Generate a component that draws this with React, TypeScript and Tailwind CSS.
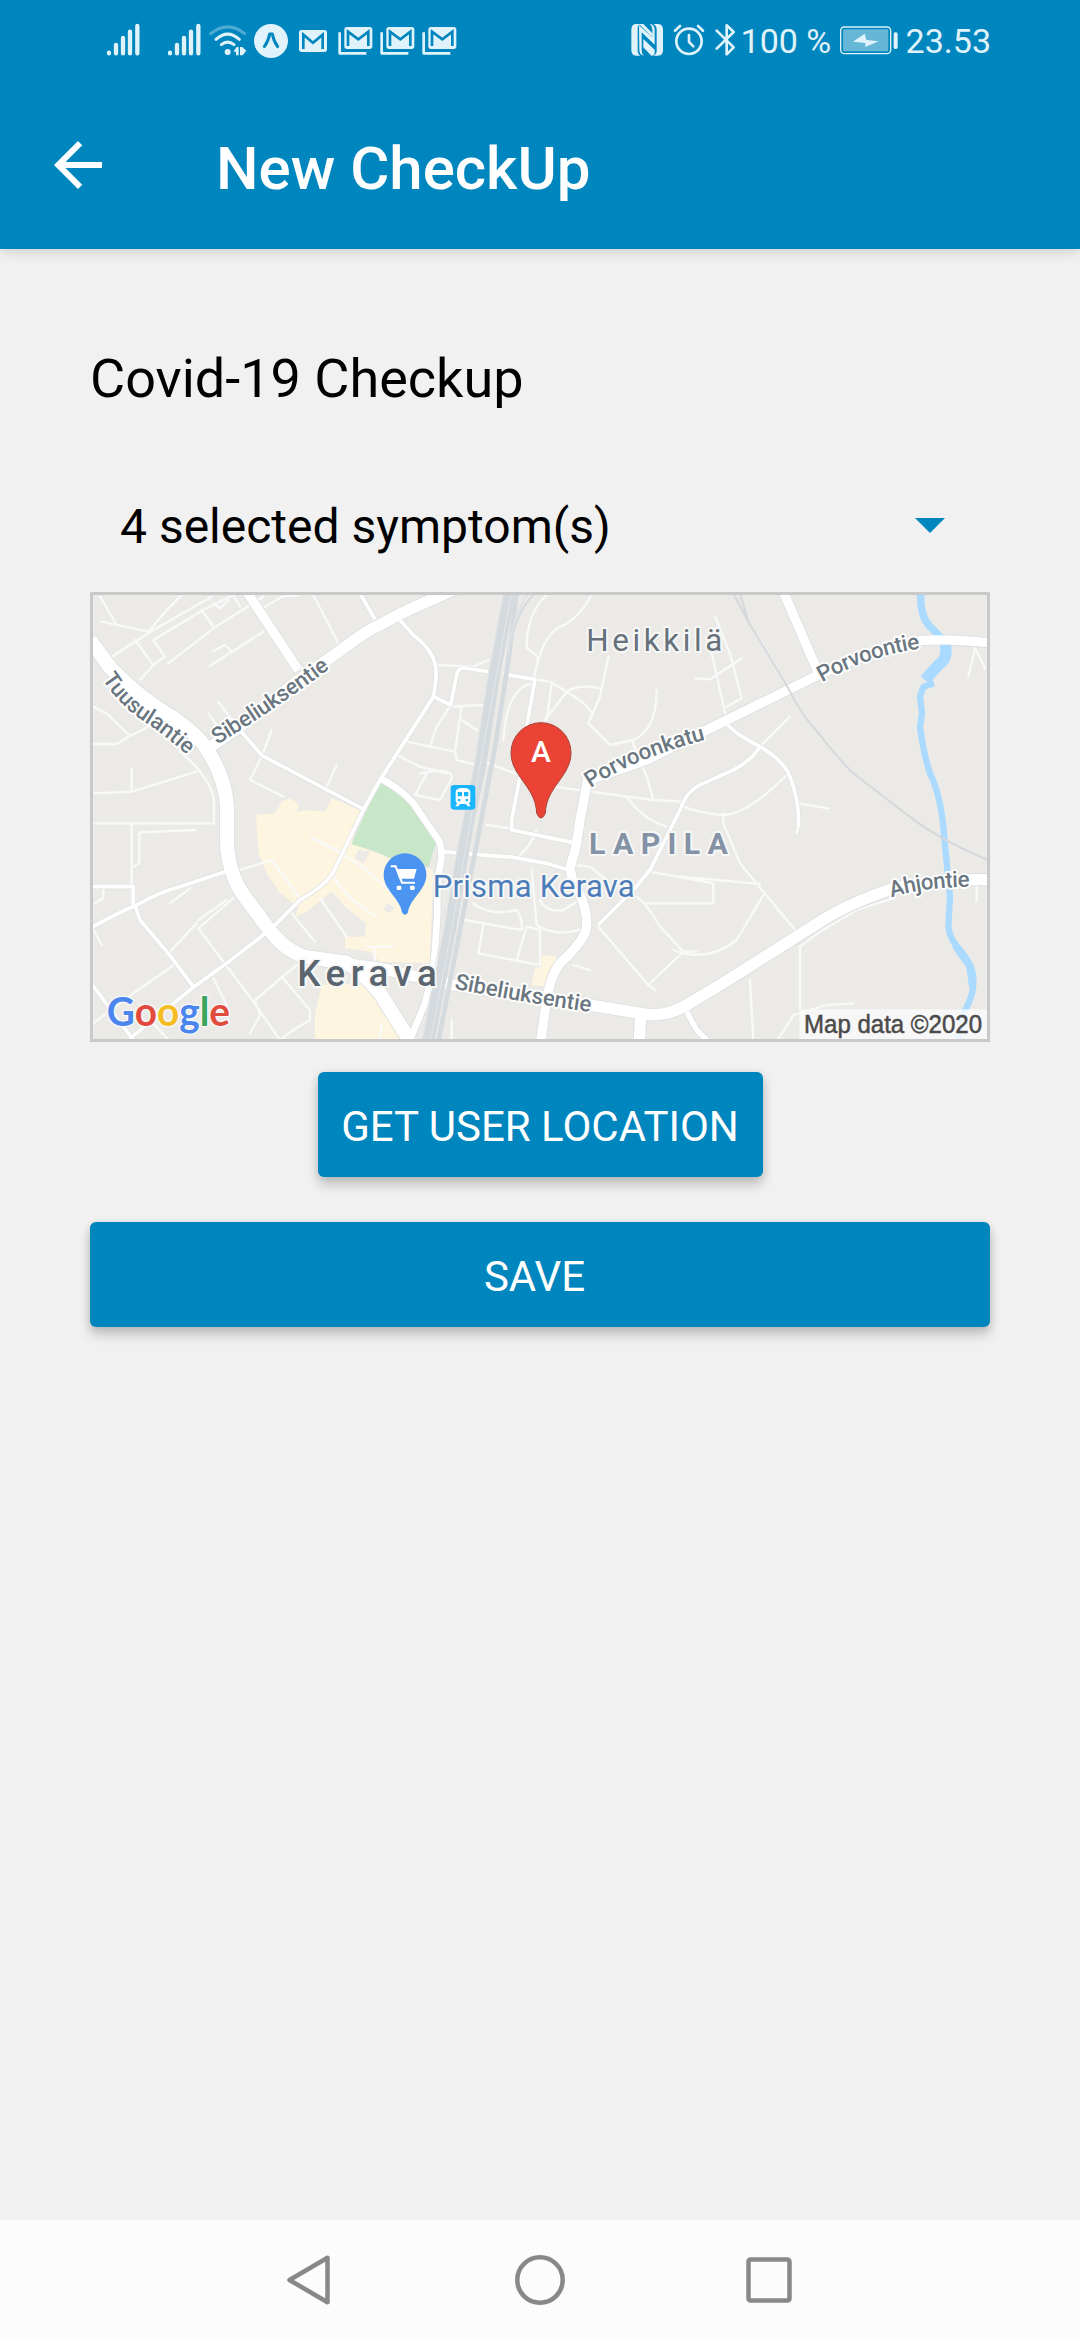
import type { ReactNode } from "react";

const TINT = "#e0f2fa";

function StatusGlyph({ box, className, children }: { box: string; className: string; children: ReactNode }) {
  return (
    <svg viewBox={box} className={`h-10 shrink-0 ${className}`} fill="none">
      {children}
    </svg>
  );
}

function Signal({ className, box }: { className: string; box: string }) {
  return (
    <StatusGlyph box={box} className={className}>
      <g stroke={TINT} strokeWidth="13" strokeLinecap="round">
        <path d="M57 99V101M78 76V101M99 55V101M120 36V101M142 19V101" transform="translate(0 59)" />
      </g>
    </StatusGlyph>
  );
}

function MailStack({ className }: { className: string }) {
  return (
    <StatusGlyph box="740 60 126 120" className={className}>
      <path d="M748 97V160H828" stroke={TINT} strokeWidth="8" strokeLinejoin="round" />
      <rect x="762" y="81" width="84" height="66" rx="8" fill={TINT} />
      <path d="M773 138V95L804 118L834 95V138" stroke="#0086be" strokeWidth="8" />
    </StatusGlyph>
  );
}

function StatusBar() {
  return (
    <div className="flex h-20 items-center pl-[105px] pr-[89px]">
      <Signal box="45 60 183 120" className="w-[61px]" />
      <Signal box="45 60 123 120" className="w-[41px]" />
      <StatusGlyph box="351 60 132 120" className="w-[44px]">
        <g stroke={TINT} strokeWidth="9" strokeLinecap="round">
          <path d="M362 101Q413 60 464 101" opacity=".35" />
          <path d="M378 118Q413 87 448 118" />
          <path d="M394 134Q413 119 432 134" />
        </g>
        <circle cx="413" cy="156" r="9" fill={TINT} />
        <path d="M430 155L440 141H446V166H438V155ZM450 141H457L469 152L458 166H450Z" fill={TINT} />
      </StatusGlyph>
      <StatusGlyph box="483 60 126 120" className="w-[42px]">
        <circle cx="543" cy="123" r="51" fill={TINT} />
        <path d="M523 140Q535 124 539 102H547Q551 124 563 140" stroke="#0086be" strokeWidth="9" strokeLinejoin="round" strokeLinecap="round" />
      </StatusGlyph>
      <StatusGlyph box="609 60 131 120" className="w-[43.67px]">
        <rect x="627" y="90" width="84" height="66" rx="8" fill={TINT} />
        <path d="M640 147V104L669 128L698 104V147" stroke="#0086be" strokeWidth="8" />
      </StatusGlyph>
      <MailStack className="w-[42px]" />
      <MailStack className="w-[42px]" />
      <MailStack className="w-[42px]" />

      <div className="ml-auto flex items-center">
        <StatusGlyph box="54 60 126 120" className="w-[42px]">
          <path d="M90 72H76Q61 72 61 89V150Q61 167 76 167H88Q80 162 80 150V83Q80 76 90 72Z" fill={TINT} />
          <path d="M127 72H140Q156 72 156 89V150Q156 167 141 167H127Q137 162 137 154V90Q137 77 127 72Z" fill={TINT} />
          <path d="M84 76L124 112V88Q124 78 116 72Q131 74 131 90V134L92 97V152Q92 162 99 167Q85 165 85 150Z" fill={TINT} />
          <path d="M84 72H97L124 100V112ZM97 117L131 149V158Q131 167 121 167L97 142Z" fill={TINT} />
        </StatusGlyph>
        <StatusGlyph box="180 60 126 120" className="w-[42px]">
          <g stroke={TINT} strokeWidth="8" strokeLinecap="round">
            <circle cx="234" cy="124" r="38" />
            <path d="M234 105V126L247 139M192 92L207 78M261 78L276 92" />
          </g>
        </StatusGlyph>
        <StatusGlyph box="306 60 81 120" className="w-[27px]">
          <path d="M317 92L368 142L347 163V76L368 96L317 146" stroke={TINT} strokeWidth="8" strokeLinecap="round" strokeLinejoin="round" />
        </StatusGlyph>
        <span className="w-[98px] whitespace-nowrap pl-px pt-px text-[34px] leading-10 text-[#e0f2fa]">100 %</span>
        <StatusGlyph box="681 60 195 120" className="w-[65px]">
          <rect x="689" y="81" width="150" height="80" rx="11" stroke={TINT} strokeWidth="4" />
          <rect x="696" y="88" width="136" height="66" rx="4" fill="#66b6d8" />
          <rect x="848" y="97" width="12" height="50" rx="5" fill={TINT} />
          <path d="M761 101L726 125L763 129V141L803 124L766 120Z" fill={TINT} />
        </StatusGlyph>
        <span className="whitespace-nowrap pl-[3px] pt-px text-[34px] leading-10 text-[#e0f2fa]">23.53</span>
      </div>
    </div>
  );
}

const MAJOR: [string, number][] = [
  ["M30 180L90 262Q170 345 250 395Q350 455 385 515Q436 595 441 680V790Q446 880 490 945L565 1045Q620 1120 690 1133L800 1148Q850 1180 900 1240L985 1375", 42],
  ["M370 515L470 447L650 305L790 205Q870 145 900 135Q960 100 1030 70L1130 25", 34],
  ["M500 35L655 270", 28],
  ["M790 1150L900 1165L1120 1215L1540 1277L1700 1303Q1760 1310 1820 1275L1920 1215L2240 1013Q2330 960 2440 926Q2560 896 2730 899", 34],
  ["M1525 590L1500 720L1488 800L1470 865Q1480 920 1500 945Q1530 1010 1515 1060Q1495 1100 1440 1150Q1410 1190 1400 1260L1382 1385", 28],
  ["M1515 605L1700 540L1880 450L2215 285Q2400 200 2520 182Q2600 175 2730 189", 28],
  ["M2110 35L2218 285", 28],
  ["M1682 1305L1678 1385", 34],
  ["M1820 1295L1850 1350L1880 1380", 16],
  ["M900 595Q960 625 1000 670L1072 775Q1090 800 1082 850Q1070 900 1072 1000L1065 1110Q1060 1180 1035 1270L990 1380", 20],
];

const MEDIUM = [
  "M475 445L545 525Q560 535 600 555L850 687",
  "M840 40L885 118",
  "M955 115L1000 165Q1065 215 1068 270Q1070 300 1060 350",
  "M1060 350L900 600L850 690L757 882Q730 920 660 960L575 1045L440 1150L340 1222L150 1375",
  "M1060 350L1112 375L1130 285Q1135 262 1155 264L1225 275",
  "M1270 282L1365 298L1340 440",
  "M30 1045Q110 1000 170 975Q240 935 300 920L435 875",
  "M165 975L180 1020L265 1120L340 1220",
  "M39 920H160V975",
  "M30 1205L160 1380",
  "M1085 815L1300 832L1400 850L1465 870",
  "M1320 590L1295 720V750L1480 788",
  "M1940 430Q1960 460 2040 500Q2110 540 2130 590Q2160 670 2155 740",
  "M2040 500Q2010 545 1960 570L1870 610Q1820 630 1800 690L1710 870L1660 930L1555 1035",
];

const MINOR = [
  "M60 50L110 135M65 125L205 155L260 90L310 40",
  "M80 240L220 150L395 50M220 180L370 90L460 45L480 80M220 180L255 230L220 255L165 180M220 255L180 300M265 250L400 145L550 50M365 90L400 140M400 70L420 85L445 60",
  "M550 155L390 258M400 213L435 195L455 215",
  "M540 90L605 50L660 45M700 45L775 190",
  "M39 380L80 400L150 468M39 492H110L150 468L215 435M39 640L155 635L350 575M155 565V635",
  "M300 515Q390 590 402 660V730H39",
  "M155 735V970M180 757L345 750M178 760V850L160 860",
  "M415 365L470 440M385 400L410 435M575 450L545 530L510 600L610 650M770 555L740 620",
  "M480 870L575 840L660 955M690 770L760 805L860 870L960 960M757 882Q790 950 890 1010M720 955L800 1070M635 1000L705 1085",
  "M70 920V955L45 970M270 970L330 925M39 1045L65 1095",
  "M460 955L355 1045L430 1145L520 1265L600 1380M355 1020L440 960M350 1030L260 1125M290 1150L160 1240L39 1330M400 1195L440 1275M650 1155L525 1260L540 1305L510 1360M605 1190L690 1290V1320L640 1350L600 1380M220 1330L265 1380",
  "M1070 255L1180 260L1225 240M1110 380L1070 440L1050 500L980 485M1110 380L1145 378L1125 515L1050 500M1145 378L1225 375M1145 420L1190 450M950 525L1020 560L1100 580M1125 515L1130 540L1190 555M1020 580Q1120 560 1115 595L1080 660L1005 645L1040 580",
  "M1400 45Q1340 100 1340 205Q1370 220 1375 240L1360 298M1535 45Q1490 125 1430 145Q1390 180 1375 240",
  "M1365 298L1410 305L1460 335Q1520 370 1532 395M1585 230L1560 350L1525 430L1590 495L1660 480Q1730 450 1730 330M1460 335Q1500 310 1560 325M1460 335L1395 420M1415 310L1400 420M1270 480Q1280 320 1360 310",
  "M1655 480L1700 590L1720 660M1420 620L1570 640L1720 660L1810 665M1640 650Q1690 720 1760 740M1200 540L1330 590M1220 735L1290 745",
  "M1905 110L1950 220L1985 355L1940 380M1895 220L1940 420M1845 295L1890 298L1985 235M2130 410L2040 500",
  "M2030 165L2125 325M1810 680Q1860 700 1930 705Q2000 705 2120 585M2155 670L2245 685M2155 740L2150 760",
  "M2685 205L2665 290M2685 205L2715 265",
  "M1930 700V730L1980 850L2050 935L2150 1055M1800 890L2040 912M1710 875L1900 910V970L1700 970M2050 945L1970 1080Q1880 1150 1780 1110",
  "M1670 950Q1700 970 1740 1040L1810 1115L1705 1215L1555 1040M1810 1115H1850M1705 1215L1725 1230",
  "M1180 970Q1230 1010 1310 990Q1330 1020 1325 1050L1155 1020M1210 1035L1195 1120L1380 1155L1380 1050L1340 1040L1310 1140M1370 750Q1350 800 1320 825M1355 870L1370 1035Q1420 1070 1500 1050M1380 960Q1400 1000 1450 990L1490 965M1480 855L1530 860L1580 900M1480 1155L1530 1170",
  "M2160 1100V1285M2010 1200L2020 1385M2090 1385L2140 1305L2240 1275L2320 1270M2690 900V965M1115 1320V1380M860 1100H945M880 1100L885 1140M905 1330L900 1380",
  "M2160 1100L2220 1055L2330 990L2440 955",
];

function RoadMap() {
  return (
    <svg viewBox="39 45 2682 1332" className="block h-full w-full" preserveAspectRatio="none" fontFamily="Roboto, sans-serif">
      <defs>
        <path id="tuusulantie" d="M66 296Q120 380 200 430Q260 470 326 530" />
        <path id="sibeliuksentie-north" d="M412 494Q560 405 760 258" />
        <path id="sibeliuksentie-south" d="M1122 1226Q1300 1262 1550 1299" />
        <path id="porvoonkatu" d="M1532 624Q1660 535 1890 476" />
        <path id="porvoontie" d="M2226 307Q2370 224 2535 204" />
        <path id="ahjontie" d="M2434 952Q2540 920 2680 920" />
      </defs>
      <rect x="0" y="0" width="2800" height="1400" fill="#ebeae7" />

      <g fill="#fdf5df">
        <path d="M528 705L585 700L605 665L630 655L655 672L650 695L685 690L735 695L755 655L840 690L815 790L930 835L1045 865L1060 870L1050 1150L900 1145L870 1115L795 1105V1070L855 1070L860 1030L800 985L755 935L680 995L645 1012L655 980L600 940L560 880L535 820Z" />
        <path d="M725 1215L705 1300V1380H965L940 1310L850 1210Z" />
        <path d="M1385 1125L1430 1128L1420 1170L1400 1220L1355 1215L1365 1165L1385 1160Z" />
      </g>
      <path d="M835 810L870 815L850 850L825 835ZM920 970L945 980L930 1000L910 990Z" fill="#ebeae7" />
      <path d="M905 605L960 635L1015 690L1068 790L1045 862L1000 850L930 835L890 815L815 793L855 700Z" fill="#c8e6c8" />

      <g fill="none" stroke="#f9f9f9" strokeWidth="7" strokeLinejoin="round" strokeLinecap="round">
        {MINOR.map((d) => <path key={d} d={d} />)}
      </g>
      <g fill="none" strokeLinejoin="round">
        <g stroke="#dfe0e3" strokeWidth="15">{MEDIUM.map((d) => <path key={d} d={d} />)}</g>
        {MAJOR.map(([d, w]) => <path key={d} d={d} stroke="#dcdee2" strokeWidth={w + 5} />)}
        <g stroke="#fff" strokeWidth="11">{MEDIUM.map((d) => <path key={d} d={d} />)}</g>
      </g>

      <g fill="none" stroke="#aadaff" strokeLinejoin="round">
        <path d="M2522 40Q2520 110 2550 140L2595 185V220" strokeWidth="22" />
        <path d="M2596 195Q2605 235 2575 255L2535 300" strokeWidth="34" />
        <path d="M2562 310L2530 320L2520 350L2526 400L2520 440Q2530 520 2550 580Q2580 640 2590 740L2602 870L2610 950L2605 1040Q2610 1080 2640 1110Q2685 1160 2680 1210Q2680 1250 2650 1300L2635 1385" strokeWidth="19" />
        <path d="M2625 1095L2670 1160L2678 1220" strokeWidth="22" />
      </g>
      <g fill="none" strokeLinejoin="round">
        {MAJOR.map(([d, w]) => <path key={d} d={d} stroke="#fff" strokeWidth={w} />)}
      </g>

      <g fill="none">
        <path d="M1288 40L1240 300L1200 560L1162 740L1110 1050L1045 1385" stroke="#d5dade" strokeWidth="36" />
        <path d="M1270 40L1222 300L1182 560L1145 740L1085 1050L1025 1385M1294 40L1210 500L1120 1020L1050 1385" stroke="#e4e7e9" strokeWidth="3" />
        <path d="M1310 40L1284 250L1245 500L1200 740L1140 1050L1075 1385" stroke="#d5dade" strokeWidth="14" />
        <path d="M1365 40Q1310 90 1290 200L1270 320" stroke="#d5dade" strokeWidth="6" />
        <path d="M1345 40Q1300 100 1284 220" stroke="#dfe2e5" strokeWidth="5" />
        <path d="M1960 40L2005 125L2125 325Q2160 400 2220 465Q2290 555 2330 588L2500 718Q2590 785 2730 842M1980 40L2005 125" stroke="#d5d8dc" strokeWidth="6" />
      </g>

      <g fill="#6b7780" stroke="#fff" strokeWidth="11" strokeLinejoin="round" paintOrder="stroke" fontSize="67" fontWeight="500">
        <text><textPath href="#tuusulantie" textLength="345">Tuusulantie</textPath></text>
        <text><textPath href="#sibeliuksentie-north" textLength="408">Sibeliuksentie</textPath></text>
        <text><textPath href="#sibeliuksentie-south" textLength="415">Sibeliuksentie</textPath></text>
        <text><textPath href="#porvoonkatu" textLength="376">Porvoonkatu</textPath></text>
        <text><textPath href="#porvoontie" textLength="313">Porvoontie</textPath></text>
        <text><textPath href="#ahjontie" textLength="238">Ahjontie</textPath></text>
      </g>
      <g strokeLinejoin="round" paintOrder="stroke" stroke="#f7f7f6" strokeWidth="12">
        <text x="1519" y="212" fontSize="94" textLength="408" fill="#66717b">Heikkilä</text>
        <text x="1527" y="821" fontSize="91" fontWeight="700" textLength="417" fill="#8592a6">LAPILA</text>
        <text x="1058" y="950" fontSize="93" textLength="606" fill="#4c7dba">Prisma Kerava</text>
        <text x="652" y="1217" fontSize="110" fontWeight="500" textLength="418" fill="#5b656f">Kerava</text>
      </g>

      <g>
        <rect x="1112" y="615" width="74" height="74" rx="10" fill="#19b5fe" />
        <path d="M1127 636Q1127 624 1149 624Q1171 624 1171 636V664Q1171 668 1166 670L1172 679H1163L1158 672H1140L1135 679H1126L1132 670Q1127 668 1127 664Z" fill="#fff" />
        <path d="M1133 636H1146V649H1133ZM1152 636H1165V649H1152ZM1134 657H1141V664H1134ZM1157 657H1164V664H1157Z" fill="#19b5fe" />
      </g>
      <g>
        <path d="M975 820A64 64 0 0 1 1039 885C1039 930 990 955 984 997Q975 1012 966 997C960 955 911 930 911 885A64 64 0 0 1 975 820Z" fill="#4b94f2" />
        <path d="M932 859H947L966 908H1005" fill="none" stroke="#fff" strokeWidth="6" />
        <path d="M948 867H1010L1002 896H958Z" fill="#fff" />
        <rect x="950" y="917" width="14" height="13" rx="4" fill="#fff" />
        <rect x="990" y="917" width="14" height="13" rx="4" fill="#fff" />
      </g>
      <path d="M1383 428A90 90 0 0 1 1473 518C1473 590 1398 620 1396 700Q1383 728 1370 700C1368 620 1293 590 1293 518A90 90 0 0 1 1383 428Z" fill="#ea4335" stroke="#a8443b" strokeWidth="3" />
      <text x="1383" y="546" fontSize="90" fontWeight="500" textAnchor="middle" fill="#fff">A</text>

      <rect x="2158" y="1288" width="570" height="95" fill="#fafafa" fillOpacity=".82" />
      <text x="2172" y="1358" fontFamily="Liberation Sans, Arial, sans-serif" fontSize="75" textLength="534" lengthAdjust="spacingAndGlyphs" fill="#4a4a4a" stroke="#4a4a4a" strokeWidth="1.5">Map data ©2020</text>
      <text x="80" y="1339" fontFamily="Lato, sans-serif" fontWeight="700" fontSize="118" textLength="370" lengthAdjust="spacingAndGlyphs" stroke="#f8f8f8" strokeWidth="8" paintOrder="stroke">
        <tspan fill="#4a86ee">G</tspan><tspan fill="#e14b3d">o</tspan><tspan fill="#f5bd22">o</tspan><tspan fill="#4a86ee">g</tspan><tspan fill="#3ba55a">l</tspan><tspan fill="#e14b3d">e</tspan>
      </text>
    </svg>
  );
}

const BUTTON =
  "flex h-[105px] items-center justify-center rounded-[6px] bg-[#0086be] pt-1 text-[42px] leading-none text-white shadow-[0_8px_12px_rgba(0,0,0,0.19),0_1px_9px_rgba(0,0,0,0.1)]";

export default function App() {
  return (
    <div className="flex h-[2340px] w-[1080px] flex-col overflow-hidden bg-[#f1f1f1] font-['Roboto',sans-serif]">
      <header className="z-10 h-[249px] shrink-0 bg-[#0086be] shadow-[0_3px_12px_rgba(0,0,0,0.14)]">
        <StatusBar />
        <div className="flex h-[169px] items-center pl-[42px]">
          <button aria-label="Back" className="mt-px">
            <svg viewBox="0 0 24 24" className="size-[72px]" fill="#fff">
              <path d="M20 11H7.83l5.59-5.59L12 4l-8 8 8 8 1.41-1.41L7.83 13H20v-2z" />
            </svg>
          </button>
          <h1 className="ml-[102px] mt-[8px] text-[60px] font-medium leading-none text-white">New CheckUp</h1>
        </div>
      </header>

      <main className="flex grow flex-col px-[90px] pt-[97px] text-black">
        <h2 className="text-[54px] leading-[66px]">Covid-19 Checkup</h2>
        <button className="mt-[65px] flex h-[98px] items-center justify-between pl-[30px] pr-[24px] text-left">
          <span className="pt-0.5 text-[48px] leading-none">4 selected symptom(s)</span>
          <svg viewBox="0 0 24 24" className="mb-[5px] size-[72px]" fill="#0086be">
            <path d="M7 10l5 5 5-5z" />
          </svg>
        </button>
        <div className="mt-[17px] h-[450px] w-[900px] border-[3px] border-[#c9c9c9]">
          <RoadMap />
        </div>
        <button className={`${BUTTON} mt-[30px] w-[445px] self-center`}>GET USER LOCATION</button>
        <button className={`${BUTTON} mt-[45px] w-[900px] pr-[11px]`}>SAVE</button>
      </main>

      <nav className="flex h-[120px] shrink-0 items-center justify-center gap-[180px] bg-[#fcfcfc]">
        <svg viewBox="0 0 50 50" className="size-[50px]" fill="none" stroke="#888" strokeWidth="4.5" strokeLinejoin="round">
          <path d="M4.5 25L42.5 2.8V47.2Z" />
        </svg>
        <svg viewBox="0 0 50 50" className="size-[50px]" fill="none" stroke="#888" strokeWidth="4.5">
          <circle cx="25" cy="25" r="22.7" />
        </svg>
        <svg viewBox="0 0 50 50" className="size-[50px]" fill="none" stroke="#888" strokeWidth="4.5">
          <rect x="3.500" y="4.5" width="41" height="41" rx="2" />
        </svg>
      </nav>
    </div>
  );
}
